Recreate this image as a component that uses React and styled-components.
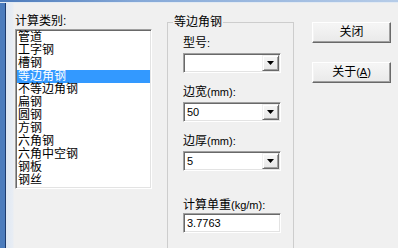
import React from 'react';
import styled, { createGlobalStyle } from 'styled-components';

const Global = createGlobalStyle`
  html, body { margin: 0; padding: 0; background: #f0f0f0; }
  body {
    font-family: "Liberation Sans", "Noto Sans CJK SC", sans-serif;
    font-size: 12px;
    color: #000;
  }
`;

const Window = styled.div`
  width: 398px;
  height: 248px;
  overflow: hidden;
  display: flex;
  flex-direction: column;
  background: #f0f0f0;
`;

const TitleEdge = styled.div`
  flex: none;
  height: 2px;
  background: linear-gradient(to right, #4c7aba, #86a9d8 35%, #b6cce8);
  border-bottom: 1px solid #e2eaf3;
`;

const Body = styled.div`
  flex: 1;
  min-height: 0;
  display: flex;
  border-left: 5px solid #4b7cbd;
`;

const Client = styled.div`
  flex: 1;
  display: flex;
  align-items: flex-start;
  border-left: 1px solid #1d3b6e;
  background: linear-gradient(to right, #dfe8f3 0, #e8edf4 7px, #f0f0f0 8px);
  padding: 12px 0 0 9px;
`;

const Column = styled.div`
  flex: none;
  width: 137px;
  display: flex;
  flex-direction: column;
`;

const Label = styled.div`
  height: 12px;
  line-height: 12px;
  white-space: nowrap;
  margin-top: ${p => p.$top || 0}px;
  margin-bottom: ${p => p.$gap ?? 4}px;
`;

const Ascii = styled.span`
  font-size: 11px;
`;

const ListBox = styled.ul`
  margin: 0;
  padding: 1px;
  list-style: none;
  height: 160px;
  box-sizing: border-box;
  background: #fff;
  border: 1px solid;
  border-color: #a0a0a0 #ffffff #ffffff #a0a0a0;
  box-shadow: inset 1px 1px #696969, inset -1px -1px #e3e3e3;
  overflow: hidden;
`;

const Item = styled.li`
  height: 13px;
  line-height: 13px;
  padding-left: 1px;
  white-space: nowrap;
  background: ${p => (p.$selected ? '#3399ff' : 'transparent')};
  color: ${p => (p.$selected ? '#ffffff' : '#000000')};
`;

const Group = styled.fieldset`
  flex: none;
  width: 127px;
  height: 240px;
  box-sizing: border-box;
  margin: 1px 0 0 15px;
  padding: 0 0 0 5px;
  border: 1px solid #cdcdcd;
  min-width: 0;
`;

const Legend = styled.legend`
  padding: 0 1px;
  line-height: 12px;
  height: 12px;
`;

const GroupInner = styled.div`
  padding: 9px 0 0 10px;
  display: flex;
  flex-direction: column;
`;

const Sunken = styled.div`
  width: 98px;
  height: 20px;
  box-sizing: border-box;
  background: #fff;
  border: 1px solid;
  border-color: #a0a0a0 #ffffff #ffffff #a0a0a0;
  box-shadow: inset 1px 1px #696969, inset -1px -1px #e3e3e3;
  display: flex;
  align-items: center;
  padding: 0 1px 0 2px;
`;

const Value = styled.span`
  flex: 1;
  font-size: 11px;
  line-height: 14px;
  padding-left: 1px;
`;

const DropButton = styled.div`
  flex: none;
  width: 17px;
  height: 16px;
  box-sizing: border-box;
  background: linear-gradient(#f7f7f7, #e6e6e6);
  border: 1px solid;
  border-color: #f0f0f0 #696969 #696969 #f0f0f0;
  box-shadow: inset 1px 1px #ffffff, inset -1px -1px #a0a0a0;
  display: flex;
  align-items: center;
  justify-content: center;
`;

const Buttons = styled.div`
  flex: none;
  margin: 7px 0 0 18px;
  display: flex;
  flex-direction: column;
  gap: 19px;
`;

const Button = styled.button`
  width: 79px;
  height: 21px;
  box-sizing: border-box;
  padding: 0;
  font: inherit;
  color: #000;
  background: linear-gradient(#f6f6f6, #e9e9e9);
  border: 1px solid;
  border-color: #ffffff #696969 #696969 #ffffff;
  box-shadow: inset -1px -1px #a0a0a0, inset 1px 1px #f4f4f4;
  line-height: 17px;
  text-align: center;
`;

const Underline = styled.span`
  text-decoration: underline;
`;

const Arrow = () => (
  <svg width="7" height="4" viewBox="0 0 7 4">
    <polygon points="0,0 7,0 3.5,4" fill="#000" />
  </svg>
);

const Combo = ({ value }) => (
  <Sunken>
    <Value>{value}</Value>
    <DropButton>
      <Arrow />
    </DropButton>
  </Sunken>
);

const items = ['管道', '工字钢', '槽钢', '等边角钢', '不等边角钢', '扁钢', '圆钢', '方钢', '六角钢', '六角中空钢', '钢板', '钢丝'];

export default function App() {
  return (
    <>
      <Global />
      <Window>
        <TitleEdge />
        <Body>
          <Client>
            <Column>
              <Label $gap={2}>计算类别:</Label>
              <ListBox>
                {items.map(it => (
                  <Item key={it} $selected={it === '等边角钢'}>{it}</Item>
                ))}
              </ListBox>
            </Column>
            <Group>
              <Legend>等边角钢</Legend>
              <GroupInner>
                <Label>型号<Ascii>:</Ascii></Label>
                <Combo value="" />
                <Label $top={13}>边宽<Ascii>(mm):</Ascii></Label>
                <Combo value="50" />
                <Label $top={13}>边厚<Ascii>(mm):</Ascii></Label>
                <Combo value="5" />
                <Label $top={28} $gap={2}>计算单重<Ascii>(kg/m):</Ascii></Label>
                <Sunken>
                  <Value>3.7763</Value>
                </Sunken>
              </GroupInner>
            </Group>
            <Buttons>
              <Button>关闭</Button>
              <Button>关于<Ascii>(<Underline>A</Underline>)</Ascii></Button>
            </Buttons>
          </Client>
        </Body>
      </Window>
    </>
  );
}
